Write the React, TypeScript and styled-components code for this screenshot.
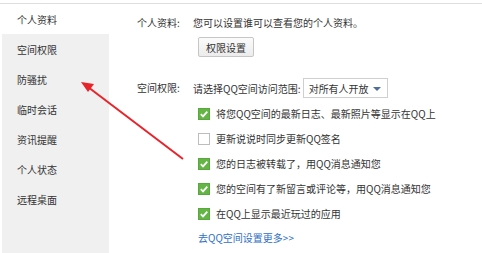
import styled, { createGlobalStyle } from "styled-components";

const GlobalStyle = createGlobalStyle`
  html, body {
    margin: 0;
    padding: 0;
    background: #fff;
  }
  body {
    font-family: "Noto Sans CJK SC", "Liberation Sans", sans-serif;
    font-size: 10px;
    color: #333;
  }
`;

const menu = ["个人资料", "空间权限", "防骚扰", "临时会话", "资讯提醒", "个人状态", "远程桌面"];

const options = [
  { text: "将您QQ空间的最新日志、最新照片等显示在QQ上", checked: true },
  { text: "更新说说时同步更新QQ签名", checked: false },
  { text: "您的日志被转载了，用QQ消息通知您", checked: true },
  { text: "您的空间有了新留言或评论等，用QQ消息通知您", checked: true },
  { text: "在QQ上显示最近玩过的应用", checked: true },
];

function CheckBox({ checked }: { checked: boolean }) {
  return (
    <Box $checked={checked}>
      {checked && (
        <svg width="10" height="10" viewBox="0 0 10 10">
          <path d="M1.8 5.2 L4 7.4 L8.3 2.6" fill="none" stroke="#fff" strokeWidth="1.7" />
        </svg>
      )}
    </Box>
  );
}

export default function App() {
  return (
    <>
      <GlobalStyle />
      <Frame>
        <Sidebar>
          {menu.map((item, i) => (
            <MenuItem key={item} $active={i === 0}>
              {item}
            </MenuItem>
          ))}
        </Sidebar>
        <Main>
          <Section>
            <Label>个人资料:</Label>
            <Value>
              <Line>您可以设置谁可以查看您的个人资料。</Line>
              <Button>权限设置</Button>
            </Value>
          </Section>
          <Section $gap={21}>
            <Label>空间权限:</Label>
            <Value>
              <SelectRow>
                请选择QQ空间访问范围:
                <Select>
                  对所有人开放
                  <Caret />
                </Select>
              </SelectRow>
              <OptionList>
                {options.map((o) => (
                  <OptionRow key={o.text}>
                    <CheckBox checked={o.checked} />
                    {o.text}
                  </OptionRow>
                ))}
                <MoreLink href="#">去QQ空间设置更多&gt;&gt;</MoreLink>
              </OptionList>
            </Value>
          </Section>
        </Main>
        <Arrow width="482" height="253" viewBox="0 0 482 253">
          <line x1="183" y1="159" x2="88" y2="87" stroke="#e8232a" strokeWidth="2" />
          <polygon points="81,82 94,84 88,92" fill="#e8232a" />
        </Arrow>
      </Frame>
    </>
  );
}

const Frame = styled.div`
  position: relative;
  display: flex;
  margin-top: 3px;
  height: 249px;
  border-top: 1px solid #dedede;
  box-sizing: content-box;
`;

const Sidebar = styled.ul`
  list-style: none;
  margin: 0 0 0 2px;
  padding: 0;
  width: 107px;
  background: #f0f0f0;
`;

const MenuItem = styled.li<{ $active: boolean }>`
  height: 30px;
  line-height: 31px;
  padding-left: 15px;
  background: ${({ $active }) => ($active ? "#fff" : "transparent")};
  color: #333;
`;

const Main = styled.div`
  flex: 1;
  padding: 9px 0 0 28px;
`;

const Section = styled.div<{ $gap?: number }>`
  display: grid;
  grid-template-columns: 56px 1fr;
  margin-top: ${({ $gap }) => $gap ?? 0}px;
`;

const Label = styled.div`
  height: 20px;
  line-height: 20px;
  color: #333;
`;

const Value = styled.div`
  display: flex;
  flex-direction: column;
  align-items: flex-start;
`;

const Line = styled.div`
  height: 20px;
  line-height: 20px;
`;

const Button = styled.button`
  margin: 4px 0 0 5px;
  width: 56px;
  height: 20px;
  padding: 0;
  font: inherit;
  color: #333;
  border: 1px solid #c6c6c6;
  border-radius: 2px;
  background: linear-gradient(#fbfbfb, #ececec);
`;

const SelectRow = styled.div`
  display: flex;
  align-items: center;
  gap: 2px;
  height: 20px;
  white-space: nowrap;
`;

const Select = styled.div`
  display: flex;
  align-items: center;
  justify-content: space-between;
  box-sizing: border-box;
  width: 85px;
  height: 20px;
  padding: 0 6px 0 5px;
  border: 1px solid #cfcfcf;
  background: #fff;
  color: #333;
`;

const Caret = styled.span`
  width: 0;
  height: 0;
  border-left: 4px solid transparent;
  border-right: 4px solid transparent;
  border-top: 4px solid #4f6d9c;
  margin-top: 1px;
`;

const OptionList = styled.div`
  display: flex;
  flex-direction: column;
  margin: 3px 0 0 5px;
`;

const OptionRow = styled.div`
  display: flex;
  align-items: center;
  gap: 6px;
  height: 25px;
  white-space: nowrap;
`;

const Box = styled.span<{ $checked: boolean }>`
  display: flex;
  align-items: center;
  justify-content: center;
  box-sizing: border-box;
  width: 12px;
  height: 12px;
  border: 1px solid ${({ $checked }) => ($checked ? "#58a93c" : "#bdbdbd")};
  background: ${({ $checked }) => ($checked ? "#64b545" : "#fff")};
`;

const MoreLink = styled.a`
  height: 24px;
  line-height: 24px;
  color: #2f6fc4;
  text-decoration: none;
`;

const Arrow = styled.svg`
  position: absolute;
  left: 0;
  top: -4px;
  pointer-events: none;
`;
